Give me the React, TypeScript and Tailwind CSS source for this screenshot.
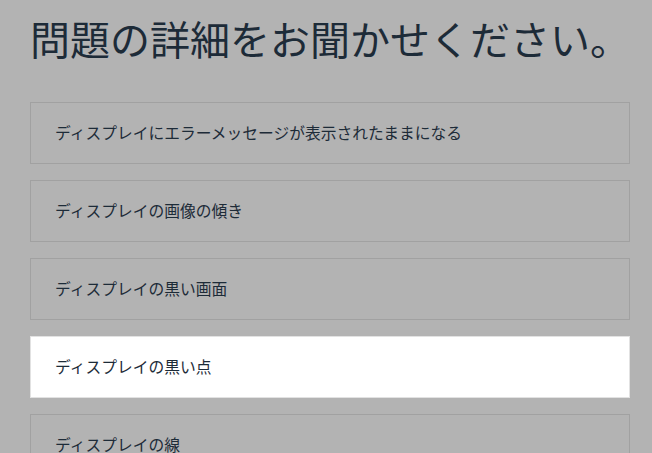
const items = [
  "ディスプレイにエラーメッセージが表示されたままになる",
  "ディスプレイの画像の傾き",
  "ディスプレイの黒い画面",
  "ディスプレイの黒い点",
  "ディスプレイの線",
];

export default function App() {
  const selected = 3;

  return (
    <div
      className="h-[453px] w-[652px] overflow-hidden bg-[#b3b3b3] px-[30px] text-[#1d2b38]"
      style={{ fontFamily: '"Noto Sans CJK JP", "Noto Sans", sans-serif' }}
    >
      {/* Heading */}
      <h1 className="pt-[18px] text-[40px] leading-[40px] font-normal whitespace-nowrap">
        問題の詳細をお聞かせください。
      </h1>

      {/* Options */}
      <div className="mt-[44px] flex w-[600px] flex-col gap-[16px]">
        {items.map((label, i) => (
          <div
            key={label}
            className={
              i === selected
                ? "flex h-[62px] shrink-0 items-center border border-[#e2e2e2] bg-white pl-[24px] text-[15.75px]"
                : "flex h-[62px] shrink-0 items-center border border-[#a1a1a1] pl-[24px] text-[15.75px]"
            }
          >
            {label}
          </div>
        ))}
      </div>
    </div>
  );
}
